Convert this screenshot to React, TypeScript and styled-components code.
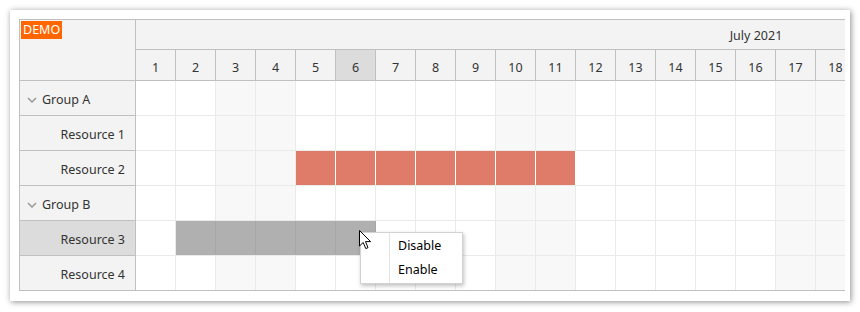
import styled, { createGlobalStyle } from "styled-components";

type Row = {
  kind: "group" | "resource";
  name: string;
  event?: [number, number];
  selection?: [number, number];
  selected?: boolean;
};

const rows: Row[] = [
  { kind: "group", name: "Group A" },
  { kind: "resource", name: "Resource 1" },
  { kind: "resource", name: "Resource 2", event: [5, 11] },
  { kind: "group", name: "Group B" },
  { kind: "resource", name: "Resource 3", selection: [2, 6], selected: true },
  { kind: "resource", name: "Resource 4" },
];

// only the days that fit in the viewport are rendered, month cell keeps the full width
const days = Array.from({ length: 18 }, (_, i) => i + 1);
const monthWidth = 31 * 40;
const highlightDay = 6;

const isWeekend = (d: number) => {
  const wd = new Date(2021, 6, d).getDay();
  return wd === 0 || wd === 6;
};

type CellKind = "empty" | "event" | "selection";

const cellKind = (row: Row, d: number): CellKind => {
  if (row.event && d >= row.event[0] && d <= row.event[1]) return "event";
  if (row.selection && d >= row.selection[0] && d <= row.selection[1]) return "selection";
  return "empty";
};

export default function App() {
  return (
    <>
      <GlobalStyle />
      <Card>
        <Scheduler>
          <RowHeaders>
            <Corner>
              <DemoBadge>DEMO</DemoBadge>
            </Corner>
            {rows.map((r) => (
              <RowHeader key={r.name} $group={r.kind === "group"} $selected={!!r.selected}>
                {r.kind === "group" && (
                  <svg width="10" height="6" viewBox="0 0 10 6">
                    <path d="M1 1 L5 5 L9 1" fill="none" stroke="#9a9a9a" strokeWidth="1.5" />
                  </svg>
                )}
                {r.name}
              </RowHeader>
            ))}
          </RowHeaders>

          <Timeline>
            <MonthRow>
              <MonthCell style={{ width: monthWidth }}>July 2021</MonthCell>
            </MonthRow>
            <DayRow>
              {days.map((d) => (
                <DayCell key={d} $active={d === highlightDay}>
                  {d}
                </DayCell>
              ))}
            </DayRow>
            {rows.map((r) => (
              <GridRow key={r.name}>
                {days.map((d) => (
                  <Cell key={d} $weekend={isWeekend(d)} $kind={cellKind(r, d)} />
                ))}
              </GridRow>
            ))}
          </Timeline>

          <Cursor width="13" height="20" viewBox="0 0 13 20">
            <path
              d="M0.5 0.5 L0.5 16 L4.2 12.5 L6.8 18.6 L9 17.6 L6.5 11.6 L11.6 11.6 Z"
              fill="#ffffff"
              stroke="#000000"
              strokeWidth="1"
              strokeLinejoin="round"
            />
          </Cursor>

          <ContextMenu>
            <MenuItem>Disable</MenuItem>
            <MenuItem>Enable</MenuItem>
          </ContextMenu>
        </Scheduler>
      </Card>
    </>
  );
}

// styles

const GlobalStyle = createGlobalStyle`
  body {
    margin: 0;
    background: #ffffff;
    font-family: "Noto Sans", "Open Sans", sans-serif;
    font-size: 12.5px;
    color: #333333;
  }
  * { box-sizing: border-box; }
`;

const Card = styled.div`
  width: 840px;
  margin: 10px;
  padding: 9px 5px 10px 9px;
  background: #ffffff;
  box-shadow: 1px 1px 6px rgba(0, 0, 0, 0.45);
`;

const Scheduler = styled.div`
  position: relative;
  display: flex;
  width: 826px;
  border-top: 1px solid #c0c0c0;
  border-left: 1px solid #c0c0c0;
  border-bottom: 1px solid #c0c0c0;
  overflow: hidden;
`;

const RowHeaders = styled.div`
  flex: 0 0 116px;
  display: flex;
  flex-direction: column;
  background: #f3f3f3;
  border-right: 1px solid #c0c0c0;
`;

const Corner = styled.div`
  height: 61px;
  padding: 1px;
  border-bottom: 1px solid #c0c0c0;
`;

const DemoBadge = styled.span`
  display: inline-block;
  background: #ff6600;
  color: #ffffff;
  font-size: 12.5px;
  line-height: 18px;
  padding: 0 2px;
`;

const RowHeader = styled.div<{ $group: boolean; $selected: boolean }>`
  height: 35px;
  display: flex;
  align-items: center;
  gap: 5px;
  justify-content: ${(p) => (p.$group ? "flex-start" : "flex-end")};
  padding: ${(p) => (p.$group ? "3px 0 0 7px" : "3px 10px 0 0")};
  background: ${(p) => (p.$selected ? "#dcdcdc" : "transparent")};
  border-bottom: 1px solid #c0c0c0;
  white-space: nowrap;

  &:last-child {
    border-bottom: none;
    height: 34px;
  }
`;

const Timeline = styled.div`
  flex: 1;
  min-width: 0;
  overflow: hidden;
`;

const MonthRow = styled.div`
  height: 30px;
  background: #f3f3f3;
  border-bottom: 1px solid #c0c0c0;
  display: flex;
  overflow: hidden;
`;

const MonthCell = styled.div`
  flex: none;
  display: flex;
  align-items: center;
  justify-content: center;
  padding-top: 2px;
`;

const DayRow = styled.div`
  display: flex;
  height: 31px;
  background: #f3f3f3;
  border-bottom: 1px solid #c0c0c0;
`;

const DayCell = styled.div<{ $active: boolean }>`
  flex: 0 0 40px;
  display: flex;
  align-items: center;
  justify-content: center;
  padding-top: 4px;
  border-right: 1px solid #c0c0c0;
  background: ${(p) => (p.$active ? "#dcdcdc" : "transparent")};
`;

const GridRow = styled.div`
  display: flex;
  height: 35px;
  border-bottom: 1px solid #eaeaea;

  &:last-child {
    border-bottom: none;
    height: 34px;
  }
`;

const cellBg = { empty: "#ffffff", event: "#df7c69", selection: "#b0b0b0" };
const cellLine = { empty: "#eaeaea", event: "#ffffff", selection: "#a6a6a6" };

const Cell = styled.div<{ $weekend: boolean; $kind: CellKind }>`
  flex: 0 0 40px;
  height: 100%;
  background: ${(p) => (p.$kind === "empty" && p.$weekend ? "#f8f8f8" : cellBg[p.$kind])};
  border-right: 1px solid ${(p) => cellLine[p.$kind]};
`;

const Cursor = styled.svg`
  position: absolute;
  left: 339px;
  top: 210px;
  z-index: 3;
`;

const ContextMenu = styled.div`
  position: absolute;
  left: 340px;
  top: 212px;
  width: 103px;
  padding: 1px 0;
  background: #ffffff;
  border: 1px solid #d2d2d2;
  box-shadow: 1px 2px 4px rgba(0, 0, 0, 0.25);
  z-index: 2;

  &::before {
    content: "";
    position: absolute;
    left: 28px;
    top: 0;
    bottom: 0;
    width: 1px;
    background: #e4e4e4;
  }
`;

const MenuItem = styled.div`
  height: 24px;
  line-height: 24px;
  padding-left: 37px;
  color: #000000;
`;
